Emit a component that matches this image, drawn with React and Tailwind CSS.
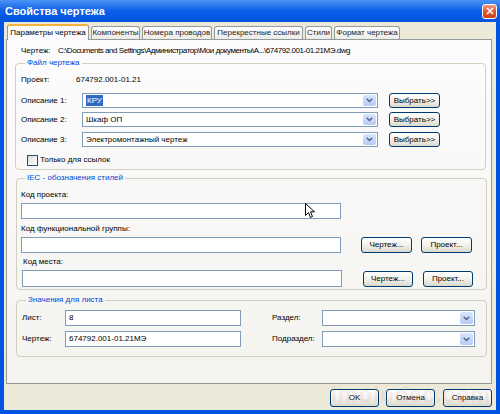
import React from "react";

const tabs = [
  { label: "Параметры чертежа", w: "w-[82px]", active: true },
  { label: "Компоненты", w: "w-[49px]" },
  { label: "Номера проводов", w: "w-[70px]" },
  { label: "Перекрестные ссылки", w: "w-[89px]" },
  { label: "Стили", w: "w-[27px]" },
  { label: "Формат чертежа", w: "w-[66px]" },
];

// XP-style push button
function XPButton({ children, className = "" }) {
  return (
    <div
      className={`flex items-center justify-center whitespace-nowrap rounded-[3px] border border-[#003c74] bg-linear-to-b from-white via-[#f3f2ec] to-[#dcd8cc] text-black ${className}`}
    >
      {children}
    </div>
  );
}

function Field({ value, className = "" }) {
  return (
    <div
      className={`flex h-[16px] items-center border border-[#7f9db9] bg-white pl-[3px] ${className}`}
    >
      {value}
    </div>
  );
}

function Combo({ value, selected = false, className = "" }) {
  return (
    <div
      className={`flex h-[15px] items-stretch border border-[#7f9db9] bg-white p-px ${className}`}
    >
      <div className="flex flex-1 items-center pl-[2px]">
        {selected ? (
          <span className="bg-[#316ac5] px-px leading-[11px] text-white">{value}</span>
        ) : (
          value
        )}
      </div>
      <div className="flex w-[13px] items-center justify-center rounded-[2px] bg-linear-to-b from-[#dae5fd] to-[#b7cbf7]">
        <svg width="7" height="5" viewBox="0 0 7 5">
          <path d="M0.7 0.7 L3.5 3.5 L6.3 0.7" stroke="#4d6185" strokeWidth="1.4" fill="none" />
        </svg>
      </div>
    </div>
  );
}

function Group({ title, className = "", children }) {
  return (
    <fieldset className={`rounded-[4px] border border-[#d0d0bf] ${className}`}>
      <legend className="ml-[4px] px-[2px] leading-[12px] text-[#0046d5]">{title}</legend>
      {children}
    </fieldset>
  );
}

export default function App() {
  return (
    <div className="relative flex h-[414px] w-[500px] flex-col overflow-hidden bg-[#0054e3] font-['Liberation_Sans',Arial,sans-serif] text-[8px] text-black">
      {/* Title bar */}
      <div className="flex h-[22px] items-center justify-between bg-linear-to-b from-[#4a93f5] via-[#0a5ee8] to-[#0453e0] pl-[5px] pr-[3px]">
        <span className="text-[11px] font-bold text-white">Свойства чертежа</span>
        <div className="flex h-[15px] w-[15px] items-center justify-center rounded-[3px] border border-white bg-linear-to-b from-[#f09a7a] via-[#e2582f] to-[#c9401b]">
          <svg width="8" height="8" viewBox="0 0 8 8">
            <path d="M1 1 L7 7 M7 1 L1 7" stroke="white" strokeWidth="1.6" />
          </svg>
        </div>
      </div>

      {/* Dialog body */}
      <div className="mx-[4px] flex h-[388px] flex-col bg-[#ece9d8]">
        {/* Tabs */}
        <div className="relative z-10 -mb-px flex h-[18px] items-end gap-[2px] pl-[3px]">
          {tabs.map((t) =>
            t.active ? (
              <div
                key={t.label}
                className={`${t.w} flex h-[16px] items-center justify-center whitespace-nowrap rounded-t-[3px] border border-b-0 border-[#919b9c] border-t-2 border-t-[#f5b33e] bg-[#fcfcfe] pb-[1px]`}
              >
                {t.label}
              </div>
            ) : (
              <div
                key={t.label}
                className={`${t.w} mb-px flex h-[13px] items-center justify-center whitespace-nowrap rounded-t-[3px] border border-b-0 border-[#919b9c] bg-linear-to-b from-white to-[#ecebe6] text-[#222]`}
              >
                {t.label}
              </div>
            )
          )}
        </div>

        {/* Tab panel */}
        <div className="ml-[2px] flex h-[345px] w-[486px] flex-col border border-[#919b9c] bg-linear-to-b from-[#fcfcfe] to-[#f4f3ee]">
          <div className="mt-[5px] flex h-[12px] items-center whitespace-nowrap pl-[14px]">
            <span className="w-[37px]">Чертеж:</span>
            <span className="tracking-[-0.45px]">C:\Documents and Settings\Администратор\Мои документы\A...\674792.001-01.21МЭ.dwg</span>
          </div>

          {/* Файл чертежа */}
          <Group title="Файл чертежа" className="ml-[8px] h-[113px] w-[471px] pl-[5px]">
            <div className="mt-[5px] flex h-[12px] items-center">
              <span className="w-[55px]">Проект:</span>
              <span>674792.001-01.21</span>
            </div>
            {[
              { label: "Описание 1:", value: "КРУ", selected: true, mt: "mt-[7px]" },
              { label: "Описание 2:", value: "Шкаф ОП", mt: "mt-[4px]" },
              { label: "Описание 3:", value: "Электромонтажный чертеж", mt: "mt-[5px]" },
            ].map((r) => (
              <div key={r.label} className={`${r.mt} flex items-center`}>
                <span className="w-[61px]">{r.label}</span>
                <Combo value={r.value} selected={r.selected} className="w-[296px]" />
                <XPButton className="ml-[11px] h-[15px] w-[51px]">Выбрать&gt;&gt;</XPButton>
              </div>
            ))}
            <div className="mt-[7px] ml-[6px] flex items-center gap-[2px]">
              <div className="h-[11px] w-[11px] border border-[#1c5180] bg-linear-to-br from-[#dcdcd7] to-white" />
              <span>Только для ссылок</span>
            </div>
          </Group>

          {/* IEC */}
          <Group title="IEC - обозначения стилей" className="ml-[9px] mt-[2px] h-[118px] w-[471px] pl-[4px]">
            <div className="mt-[5px] h-[12px] leading-[12px]">Код проекта:</div>
            <Field className="mt-[2px] w-[320px]" value="" />
            <div className="mt-[4px] h-[12px] leading-[12px]">Код функциональной группы:</div>
            <div className="mt-[2px] flex items-center">
              <Field className="w-[320px]" value="" />
              <XPButton className="ml-[20px] h-[16px] w-[51px]">Чертеж...</XPButton>
              <XPButton className="ml-[9px] h-[16px] w-[51px]">Проект...</XPButton>
            </div>
            <div className="mt-[3px] ml-[2px] h-[12px] leading-[12px]">Код места:</div>
            <div className="mt-[2px] ml-px flex items-center">
              <Field className="h-[17px] w-[320px]" value="" />
              <XPButton className="ml-[21px] h-[16px] w-[50px]">Чертеж...</XPButton>
              <XPButton className="ml-[10px] h-[16px] w-[50px]">Проект...</XPButton>
            </div>
          </Group>

          {/* Значения для листа */}
          <Group title="Значения для листа" className="ml-[9px] mt-[4px] h-[63px] w-[471px] pl-[5px]">
            <div className="mt-[4px] flex items-center">
              <span className="w-[43px]">Лист:</span>
              <Field className="w-[176px]" value="8" />
              <span className="ml-[31px] w-[50px]">Раздел:</span>
              <Combo value="" className="h-[16px] w-[153px]" />
            </div>
            <div className="mt-[5px] flex items-center">
              <span className="w-[43px]">Чертеж:</span>
              <Field className="w-[176px]" value="674792.001-01.21МЭ" />
              <span className="ml-[31px] w-[50px]">Подраздел:</span>
              <Combo value="" className="h-[16px] w-[153px]" />
            </div>
          </Group>
        </div>

        {/* Dialog buttons */}
        <div className="mt-[5px] flex justify-end gap-[7px] pr-[4px]">
          <XPButton className="h-[18px] w-[49px]">OK</XPButton>
          <XPButton className="h-[18px] w-[49px]">Отмена</XPButton>
          <XPButton className="ml-[1px] h-[18px] w-[49px]">Справка</XPButton>
        </div>
      </div>

      {/* watermark */}
      <div className="pointer-events-none absolute left-[331px] top-[378px] text-[22px] font-bold tracking-[1px] text-[#d8a8a8]/20">
        imolodec.com
      </div>

      {/* mouse cursor */}
      <svg className="absolute left-[305px] top-[203px]" width="10" height="16" viewBox="0 0 10 16">
        <path d="M0.5 0.5 L0.5 12.5 L3.5 9.5 L5.5 14.5 L7.5 13.5 L5.5 8.8 L9.5 8.8 Z" fill="white" stroke="black" strokeWidth="1" strokeLinejoin="round" />
      </svg>
    </div>
  );
}
